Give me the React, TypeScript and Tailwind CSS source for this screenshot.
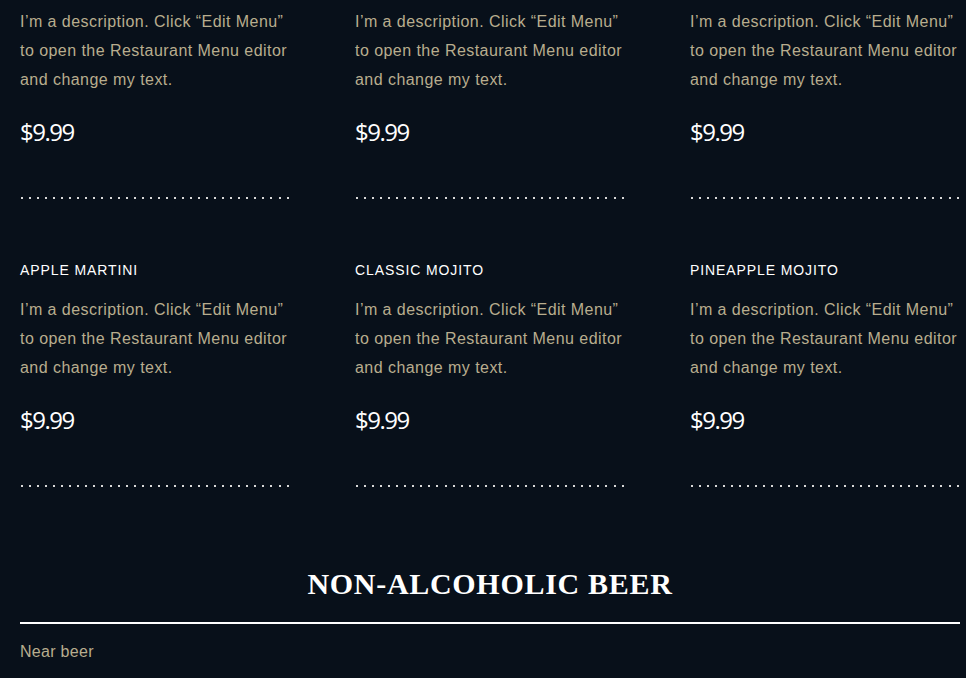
const items = [
  ["MOSCOW MULE", "CUBA LIBRE", "DAIQUIRI"],
  ["APPLE MARTINI", "CLASSIC MOJITO", "PINEAPPLE MOJITO"],
];

const desc = "I’m a description. Click “Edit Menu” to open the Restaurant Menu editor and change my text.";

function Dots() {
  return (
    <div className="flex justify-between w-[268px] ml-[1px]">
      {Array.from({ length: 34 }).map((_, i) => (
        <span key={i} className="block w-[2px] h-[2px] bg-[#d9d9d9]" />
      ))}
    </div>
  );
}

function Item({ title }: { title: string }) {
  return (
    <div className="flex flex-col">
      <h3 className="text-[14px] leading-[20px] tracking-[0.9px] text-white font-['Liberation_Sans',sans-serif]">
        {title}
      </h3>
      <p className="mt-[15px] text-[16px] leading-[29px] text-[#b8ad8e] tracking-[0.45px] font-['Liberation_Sans',sans-serif]">
        {desc}
      </p>
      <div className="mt-[23px] text-[24px] leading-[30px] text-white tracking-[-1.5px] font-['Open_Sans',sans-serif]">
        $9.99
      </div>
      <div className="mt-[50px]">
        <Dots />
      </div>
    </div>
  );
}

export default function App() {
  return (
    <div className="min-h-screen bg-[#08101a] overflow-hidden">
      <div className="pl-5 pr-[6px] -mt-[28px]">
        <div className="flex flex-col gap-[61px]">
          {items.map((row, r) => (
            <div key={r} className="grid grid-cols-3 gap-x-[65px]">
              {row.map((t) => (
                <Item key={t} title={t} />
              ))}
            </div>
          ))}
        </div>
        <h2 className="mt-[77px] text-center text-[30px] leading-[40px] font-bold text-white tracking-[0.7px] font-['Liberation_Serif',serif]">
          NON-ALCOHOLIC BEER
        </h2>
        <div className="mt-[18px] h-[2px] bg-white" />
        <p className="mt-[16px] text-[16px] leading-[24px] tracking-[0.3px] text-[#b8ad8e] font-['Liberation_Sans',sans-serif]">
          Near beer
        </p>
      </div>
    </div>
  );
}
